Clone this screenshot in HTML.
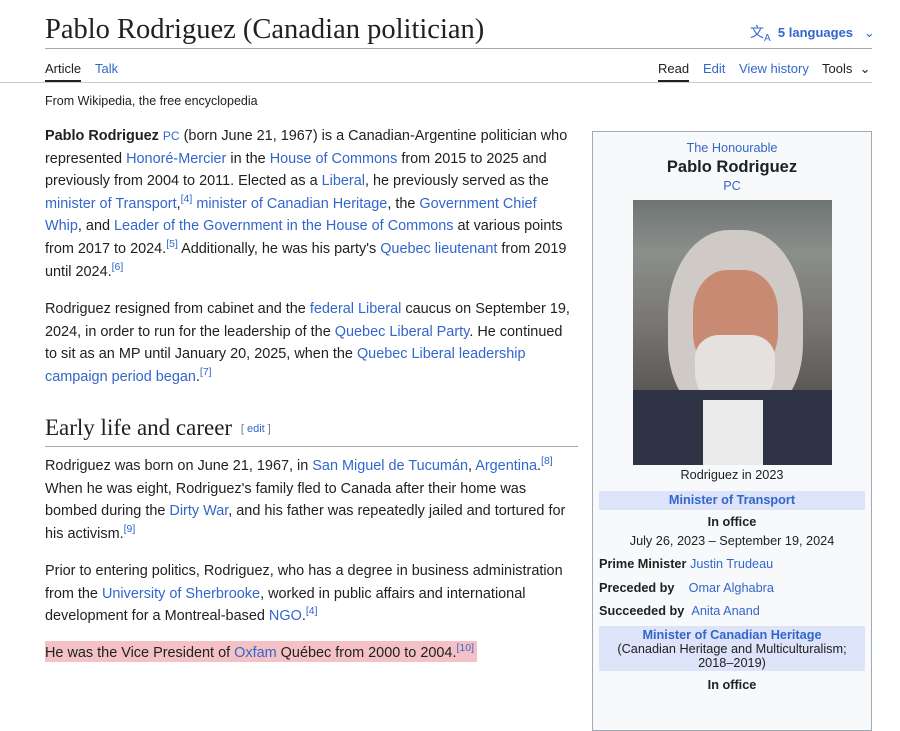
<!DOCTYPE html>
<html><head><meta charset="utf-8"><style>
*{margin:0;padding:0;box-sizing:border-box}
body{width:900px;height:686px;overflow:hidden;background:#fff;font-family:"Liberation Sans",sans-serif;color:#202122;position:relative}
a{color:#3366cc;text-decoration:none}
.abs{position:absolute}
h1{position:absolute;left:45px;top:14px;font-family:"Liberation Serif",serif;font-weight:normal;font-size:28.5px;color:#202122}
.p{position:absolute;left:45px;width:540px;font-size:14.45px;line-height:22.6px;white-space:nowrap}
sup{font-size:10.5px;line-height:0;vertical-align:6px}
.ib{position:absolute;left:592px;top:131px;width:280px;height:600px;background:#f8f9fa;border:1px solid #a2a9b1;font-size:12.7px;text-align:center}
.hdr{background:#dde3f8;font-weight:bold;margin:0 6px}
.row{position:absolute;left:6px;font-size:12.7px}
</style></head><body>
<h1>Pablo Rodriguez (Canadian politician)</h1>
<div class="abs" style="left:750px;top:22px;font-size:13px;font-weight:bold;color:#3366cc"><span style="font-weight:normal;font-size:14px">文<sub style="font-size:10px">A</sub></span>&nbsp; 5 languages &nbsp;&nbsp;<span style="font-weight:normal">⌄</span></div>
<div class="abs" style="left:45px;top:48px;width:827px;height:1px;background:#a2a9b1"></div>
<div class="abs" style="left:45px;top:61px;font-size:13px">Article</div>
<div class="abs" style="left:45px;top:80px;width:36px;height:2px;background:#202122"></div>
<div class="abs" style="left:95px;top:61px;font-size:13px;color:#3366cc">Talk</div>
<div class="abs" style="left:658px;top:61px;font-size:13px">Read</div>
<div class="abs" style="left:658px;top:80px;width:31px;height:2px;background:#202122"></div>
<div class="abs" style="left:703px;top:61px;font-size:13px;color:#3366cc">Edit</div>
<div class="abs" style="left:739px;top:61px;font-size:13px;color:#3366cc">View history</div>
<div class="abs" style="left:822px;top:61px;font-size:13px">Tools &nbsp;⌄</div>
<div class="abs" style="left:0;top:82px;width:872px;height:1px;background:#c8ccd1"></div>
<div class="abs" style="left:45px;top:94px;font-size:12.5px">From Wikipedia, the free encyclopedia</div>

<div class="p" style="top:125px"><b>Pablo Rodriguez</b> <a style="font-size:12px">PC</a> (born June 21, 1967) is a Canadian-Argentine politician who<br>represented <a>Honoré-Mercier</a> in the <a>House of Commons</a> from 2015 to 2025 and<br>previously from 2004 to 2011. Elected as a <a>Liberal</a>, he previously served as the<br><a>minister of Transport</a>,<sup><a>[4]</a></sup> <a>minister of Canadian Heritage</a>, the <a>Government Chief<br>Whip</a>, and <a>Leader of the Government in the House of Commons</a> at various points<br>from 2017 to 2024.<sup><a>[5]</a></sup> Additionally, he was his party's <a>Quebec lieutenant</a> from 2019<br>until 2024.<sup><a>[6]</a></sup></div>
<div class="p" style="top:298px">Rodriguez resigned from cabinet and the <a>federal Liberal</a> caucus on September 19,<br>2024, in order to run for the leadership of the <a>Quebec Liberal Party</a>. He continued<br>to sit as an MP until January 20, 2025, when the <a>Quebec Liberal leadership<br>campaign period began</a>.<sup><a>[7]</a></sup></div>
<div class="abs" style="left:45px;top:415px;font-family:'Liberation Serif',serif;font-size:23px">Early life and career <span style="font-family:'Liberation Sans',sans-serif;font-size:11px;color:#72777d;vertical-align:3px">&nbsp;[ <a>edit</a> ]</span></div>
<div class="abs" style="left:45px;top:446px;width:533px;height:1px;background:#a2a9b1"></div>
<div class="p" style="top:455px">Rodriguez was born on June 21, 1967, in <a>San Miguel de Tucumán</a>, <a>Argentina</a>.<sup><a>[8]</a></sup><br>When he was eight, Rodriguez's family fled to Canada after their home was<br>bombed during the <a>Dirty War</a>, and his father was repeatedly jailed and tortured for<br>his activism.<sup><a>[9]</a></sup></div>
<div class="p" style="top:560px">Prior to entering politics, Rodriguez, who has a degree in business administration<br>from the <a>University of Sherbrooke</a>, worked in public affairs and international<br>development for a Montreal-based <a>NGO</a>.<sup><a>[4]</a></sup></div>
<div class="abs" style="left:45px;top:641px;width:432px;height:21px;background:#f4c2c5"></div>
<div class="p" style="top:642px">He was the Vice President of <a>Oxfam</a> Québec from 2000 to 2004.<sup><a>[10]</a></sup></div>

<div class="ib">
<div class="abs" style="left:0;width:278px;top:9px;color:#3366cc">The Honourable</div>
<div class="abs" style="left:0;width:278px;top:26px;font-size:16.5px;font-weight:bold">Pablo Rodriguez</div>
<div class="abs" style="left:0;width:278px;top:47px;color:#3366cc">PC</div>
<div class="abs" style="left:40px;top:68px;width:199px;height:265px;background:linear-gradient(180deg,#6f7572 0%,#8a8f8c 20%,#7a7775 45%,#5e5a5a 70%,#2e3444 100%);overflow:hidden">
<div class="abs" style="left:35px;top:30px;width:135px;height:190px;border-radius:45% 45% 40% 40%;background:#cfcac6"></div>
<div class="abs" style="left:60px;top:70px;width:85px;height:105px;border-radius:40%;background:#c98a74"></div>
<div class="abs" style="left:62px;top:135px;width:80px;height:75px;border-radius:30% 30% 50% 50%;background:#e4e1df"></div>
<div class="abs" style="left:0;top:190px;width:199px;height:80px;background:#2e3445"></div>
<div class="abs" style="left:70px;top:200px;width:60px;height:70px;background:#ecebec"></div>
</div>
<div class="abs" style="left:0;width:278px;top:336px">Rodriguez in 2023</div>
<div class="hdr abs" style="left:0;width:266px;top:359px;height:19px;padding-top:2px;color:#3366cc">Minister of Transport</div>
<div class="abs" style="left:0;width:278px;top:383px;font-weight:bold">In office</div>
<div class="abs" style="left:0;width:278px;top:402px">July 26, 2023 – September 19, 2024</div>
<div class="row" style="top:425px"><b>Prime Minister</b> <a>Justin Trudeau</a></div>
<div class="row" style="top:449px"><b>Preceded by</b> &nbsp;&nbsp;&nbsp;<a>Omar Alghabra</a></div>
<div class="row" style="top:472px"><b>Succeeded by</b> &nbsp;<a>Anita Anand</a></div>
<div class="hdr abs" style="left:0;width:266px;top:494px;height:45px;padding-top:2px;line-height:14px"><a>Minister of Canadian Heritage</a><br><span style="font-weight:normal">(Canadian Heritage and Multiculturalism;<br>2018–2019)</span></div>
<div class="abs" style="left:0;width:278px;top:546px;font-weight:bold">In office</div>
</div>
</body></html>
